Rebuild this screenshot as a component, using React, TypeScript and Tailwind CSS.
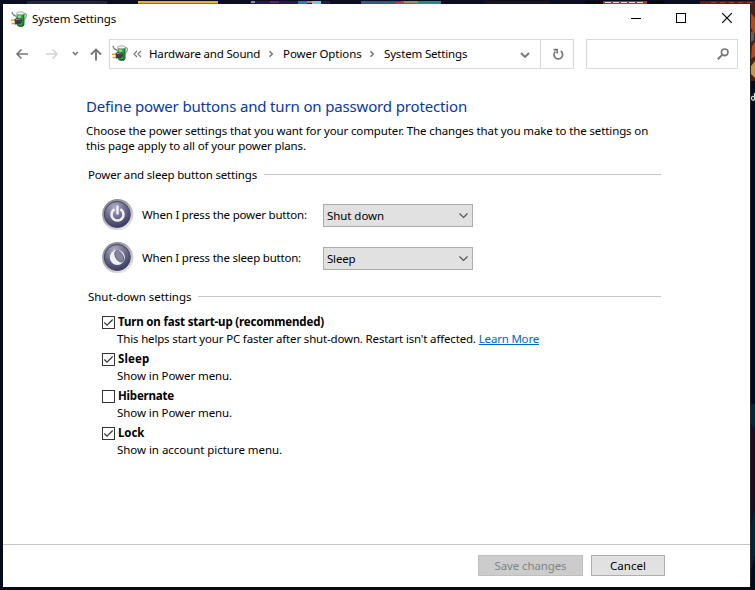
import type { ReactNode } from 'react';

function PowerPlug() {
  return (
    <svg width="16" height="16" viewBox="0 0 16 16" className="shrink-0">
      <path d="M12.800 2.800 Q15.600 2 15.300 4.800 Q15 7.500 13.200 8.500" fill="none" stroke="#8c9794" strokeWidth="1.300" />
      <path d="M5.500 2.500 H13.300 V13.500 Q12.500 15.800 9.500 15.800 Q6.500 15.800 6 13.500 Z" fill="#2fae40" />
      <path d="M12 3 H13.400 V13.500 Q12.800 15.300 11 15.700 Z" fill="#187a2a" />
      <path d="M7 4.500 H9.800 V8 H7Z" fill="#86e88c" />
      <path d="M6 13.300 Q9.500 15.500 13 13 L12.500 15 Q9.500 16.600 6.800 15Z" fill="#15602a" />
      <ellipse cx="9.400" cy="2.300" rx="3.900" ry="1.500" fill="#eef3ee" stroke="#879188" strokeWidth=".7" />
      <path d="M1 .8 Q1.500 4.200 4.500 4.800 L6.200 7" fill="none" stroke="#78837f" strokeWidth="1.200" />
      <path d="M0 9.200 H4.500 M.5 12.500 H5" stroke="#e3a71e" strokeWidth="1.500" />
      <path d="M3.500 8 L6.500 6.800 Q10.500 6.600 11.200 9.200 Q11.300 12 8.500 13.200 L4 13.500Z" fill="#3c3d42" />
      <path d="M4.800 8.800 L7 8 Q8.800 7.900 9.600 9" fill="none" stroke="#a0a3a6" strokeWidth="1" />
    </svg>
  );
}

function RoundButton({ id, children }: { id: string; children: ReactNode }) {
  return (
    <svg width="32" height="32" viewBox="0 0 32 32" className="shrink-0">
      <defs>
        <linearGradient id={`${id}-rim`} x1="0" y1="0" x2=".6" y2="1">
          <stop offset="0" stopColor="#777a7c" />
          <stop offset=".5" stopColor="#a9a9ae" />
          <stop offset="1" stopColor="#e3e3e6" />
        </linearGradient>
        <radialGradient id={`${id}-face`} cx=".4" cy=".22" r=".8">
          <stop offset="0" stopColor="#b0b0c8" />
          <stop offset=".5" stopColor="#6e6d8e" />
          <stop offset="1" stopColor="#39385f" />
        </radialGradient>
      </defs>
      <circle cx="15.700" cy="15.700" r="15.600" fill={`url(#${id}-rim)`} />
      <circle cx="15.300" cy="15.500" r="13" fill={`url(#${id}-face)`} stroke="#454462" strokeWidth="1" />
      {children}
    </svg>
  );
}

function Select({ value, tracking }: { value: string; tracking: string }) {
  return (
    <div className="flex h-[23px] w-[150px] items-center justify-between border border-[#adadad] bg-[#e1e1e1] pl-[3px] pr-[3px]">
      <span className={`pt-px ${tracking}`}>{value}</span>
      <svg width="11" height="7" viewBox="0 0 11 7" fill="none" stroke="#505050" strokeWidth="1.100">
        <path d="M1.500 1.500 L5.500 5.500 L9.500 1.500" />
      </svg>
    </div>
  );
}

function SectionTitle({ children, tracking }: { children: ReactNode; tracking: string }) {
  return (
    <div className="flex h-4 w-[573px] items-center">
      <span className={`mr-[7px] ${tracking}`}>{children}</span>
      <span className="mb-[2px] h-px flex-1 bg-[#c5c5c5]" />
    </div>
  );
}

function Option({ label, tracking, checked, children }: { label: string; tracking: string; checked?: boolean; children: ReactNode }) {
  return (
    <div className="h-[37px]">
      <div className="flex h-[17px] items-center">
        <span className="mr-[3px] mt-px flex size-[13px] items-center justify-center border border-[#333] bg-white">
          {checked && (
            <svg width="11" height="11" viewBox="0 0 11 11" fill="none" stroke="#333" strokeWidth="1.200">
              <path d="M1.300 5.500 L4 8.200 L9.700 2.500" />
            </svg>
          )}
        </span>
        <span className={`font-bold ${tracking}`}>{label}</span>
      </div>
      <div className="flex h-[17px] items-center pl-[15px]">{children}</div>
    </div>
  );
}

function Separator() {
  return (
    <svg width="6" height="8" viewBox="0 0 6 8" fill="none" stroke="#777" strokeWidth="1.500" className="shrink-0">
      <path d="M1.500 1.200 L4.300 4 L1.500 6.800" />
    </svg>
  );
}

function TitleBar() {
  return (
    <div className="flex h-[30px] items-center">
      <div className="ml-2 flex w-[604px] shrink-0 items-center gap-[5px]">
        <PowerPlug />
        <span className="tracking-[-0.12px]">System Settings</span>
      </div>
      <svg width="106" height="12" viewBox="0 0 106 12" fill="none" stroke="#000" strokeWidth="1" className="mb-[2px] ml-4 shrink-0">
        <path d="M0 6.500 H10" shapeRendering="crispEdges" />
        <path d="M45.500 1.500 h9 v9 h-9z" shapeRendering="crispEdges" />
        <path d="M91.200 1.200 L100.800 10.800 M100.800 1.200 L91.200 10.800" strokeWidth="1.200" />
      </svg>
    </div>
  );
}

function AddressBar() {
  return (
    <div className="mt-[5px] flex h-[30px] items-center">
      <svg width="90" height="16" viewBox="0 0 90 16" fill="none" className="ml-3 mr-1 shrink-0">
        <g stroke="#777" strokeWidth="1.600">
          <path d="M2 8 H13 M6.500 3.500 L2 8 L6.500 12.500" />
          <path d="M57.800 6 L60.300 8.500 L62.800 6" strokeWidth="1.600" />
          <path d="M81 14.500 V4 M76 8.500 L81 3.500 L86 8.500" strokeWidth="1.900" />
        </g>
        <path d="M31 8 H42 M37.500 3.500 L42 8 L37.500 12.500" stroke="#d4d4d4" strokeWidth="1.500" />
      </svg>
      <div className="flex h-full w-[465px] shrink-0 border border-[#d9d9d9]">
        <div className="flex w-[430px] items-center pl-[2px]">
          <span className="mb-[2px]">
            <PowerPlug />
          </span>
          <svg width="9" height="8" viewBox="0 0 9 8" fill="none" stroke="#777" strokeWidth="1.200" className="ml-[5px] mr-[7px] shrink-0">
            <path d="M4 1 L1 4 L4 7 M8 1 L5 4 L8 7" />
          </svg>
          <span className="w-[119px] tracking-[-0.17px]">Hardware and Sound</span>
          <Separator />
          <span className="ml-[9px] w-[86px] tracking-[-0.08px]">Power Options</span>
          <Separator />
          <span className="ml-[9px] tracking-[-0.17px]">System Settings</span>
          <svg width="10" height="7" viewBox="0 0 10 7" fill="none" stroke="#777" strokeWidth="1.900" className="ml-auto mr-[10px] mt-[3px]">
            <path d="M1 1 L5 5 L9 1" />
          </svg>
        </div>
        <div className="flex flex-1 items-center justify-center border-l border-[#d9d9d9]">
          <svg width="12" height="13" viewBox="0 0 12 13" fill="none" stroke="#777" strokeWidth="1.700" className="ml-px">
            <path d="M8.700 3 A4.300 4.300 0 1 1 3.300 3.500" />
            <path d="M1.500 1.600 H5.200 V5.500" />
          </svg>
        </div>
      </div>
      <div className="ml-3 flex h-full w-[152px] shrink-0 items-center justify-end border border-[#d9d9d9] pr-2">
        <svg width="12" height="12" viewBox="0 0 12 12" fill="none" stroke="#777" strokeWidth="1.700">
          <circle cx="7.700" cy="4.300" r="3.300" />
          <path d="M5.400 6.600 L.8 11.200" strokeWidth="2" />
        </svg>
      </div>
    </div>
  );
}

function TopStrip() {
  return (
    <svg width="755" height="4" viewBox="0 0 755 4" shapeRendering="crispEdges" className="block shrink-0">
      <rect width="755" height="4" fill="#0b0d22" />
      <rect x="27" y="1" width="80" height="3" fill="#252338" />
      <rect x="138" y="1" width="80" height="2" fill="#dcb52a" />
      <rect x="138" y="3" width="80" height="1" fill="#8d7629" />
      <rect x="250" y="1" width="80" height="3" fill="#251a4b" />
      <rect x="251" y="1" width="4" height="2" fill="#8d8aa0" />
      <rect x="270" y="1" width="9" height="2" fill="#59256c" />
      <rect x="298" y="1" width="9" height="3" fill="#2b7bae" />
      <rect x="307" y="1" width="5" height="2" fill="#c5796f" />
      <rect x="312" y="1" width="9" height="3" fill="#83c5cd" />
      <rect x="361" y="1" width="40" height="3" fill="#2d5c7d" />
      <rect x="401" y="1" width="40" height="3" fill="#2a8788" />
      <rect x="396" y="2" width="9" height="2" fill="#bf3940" />
      <rect x="404" y="1" width="14" height="2" fill="#8a9b48" />
      <rect x="485" y="1" width="65" height="3" fill="#1b141b" />
      <rect x="585" y="1" width="80" height="3" fill="#08080a" />
      <rect x="603" y="1" width="44" height="3" fill="#bd2430" />
      <path d="M605 2.500 H645" stroke="#e8d8da" strokeDasharray="6 2" />
      <rect x="700" y="1" width="55" height="3" fill="#582016" />
      <path d="M711 2.500 H755" stroke="#a33b19" strokeDasharray="5 4" />
    </svg>
  );
}

function RightStrip() {
  return (
    <svg width="5" height="583" viewBox="0 0 5 583" className="block shrink-0">
      <rect width="5" height="583" fill="#020a20" />
      <rect width="5" height="77" fill="#4a2017" />
      <path d="M0 8 L5 14 V30 L1 24Z M2 42 L5 38 V52 L1 55Z" fill="#b34a1e" />
      <path d="M1 28 L4 26 V36 L1 38Z" fill="#596165" />
      <path d="M1 62 L5 57 V74 L1 70Z" fill="#c9924e" />
      <path d="M4.500 89 V96 M4.500 93 Q1.500 91.500 1.500 94 Q1.500 97 4.500 96" fill="none" stroke="#d0d0d8" strokeWidth="1.300" />
      <path d="M0 400 H5 V425 L0 419Z" fill="#02273b" />
      <path d="M0 419 L5 425 V505 L0 525Z" fill="#170d1c" />
      <path d="M5 505 V550 L0 570 V525Z" fill="#022438" />
      <rect width="1" height="583" fill="#252525" />
    </svg>
  );
}

export default function App() {
  return (
    <div className="flex h-[590px] w-[755px] flex-col overflow-hidden whitespace-nowrap bg-[#060b1d] font-['Noto_Sans',sans-serif] text-[11.5px] leading-4 text-black">
      <TopStrip />
      <div className="flex h-[583px]">
        <div className="ml-[3px] flex w-[747px] shrink-0 flex-col bg-white">
          <TitleBar />
          <AddressBar />
          <main className="flex flex-1 flex-col pl-[83px] pt-[27px]">
            <h1 className="h-5 text-[15px] leading-5 tracking-[-0.155px] text-[#08399f]">
              Define power buttons and turn on password protection
            </h1>
            <p className="mt-[7px] leading-[15px]">
              <span className="block tracking-[-0.12px]">
                Choose the power settings that you want for your computer. The changes that you make to the settings on
              </span>
              <span className="block tracking-[-0.13px]">this page apply to all of your power plans.</span>
            </p>
            <div className="ml-[2px] mt-[14px]">
              <SectionTitle tracking="tracking-[-0.18px]">Power and sleep button settings</SectionTitle>
              <div className="ml-[14px] mt-4 flex h-8 items-center">
                <RoundButton id="power">
                  <path d="M11.800 10.800 A6 6 0 1 0 19.200 10.800" fill="none" stroke="#f0f0f6" strokeWidth="2.600" strokeLinecap="round" />
                  <path d="M15.500 7.500 V14.500" stroke="#f0f0f6" strokeWidth="2.500" strokeLinecap="round" />
                </RoundButton>
                <span className="ml-2 w-[181px] tracking-[-0.2px]">When I press the power button:</span>
                <Select value="Shut down" tracking="tracking-[-0.06px]" />
              </div>
              <div className="ml-[14px] mt-[11px] flex h-8 items-center">
                <RoundButton id="sleep">
                  <circle cx="15.300" cy="15.500" r="7.500" fill="#f0f0f5" />
                  <ellipse cx="17.200" cy="14.300" rx="3.700" ry="6.300" transform="rotate(-30 17.200 14.300)" fill="#85849c" stroke="#55546e" strokeWidth=".7" />
                </RoundButton>
                <span className="ml-2 w-[181px] tracking-[-0.21px]">When I press the sleep button:</span>
                <Select value="Sleep" tracking="tracking-[-0.2px]" />
              </div>
            </div>
            <div className="ml-[2px] mt-[15px]">
              <SectionTitle tracking="tracking-[-0.05px]">Shut-down settings</SectionTitle>
              <div className="ml-[14px] mt-2">
                <Option label="Turn on fast start-up (recommended)" tracking="tracking-[-0.17px]" checked>
                  <span className="tracking-[-0.165px]">This helps start your PC faster after shut-down. Restart isn't affected.</span>
                  <a className="ml-[3px] tracking-[-0.2px] text-[#0066cc] underline">Learn More</a>
                </Option>
                <Option label="Sleep" tracking="tracking-[0.1px]" checked>
                  <span className="tracking-[-0.085px]">Show in Power menu.</span>
                </Option>
                <Option label="Hibernate" tracking="tracking-[-0.19px]">
                  <span className="tracking-[-0.085px]">Show in Power menu.</span>
                </Option>
                <Option label="Lock" tracking="tracking-[-0.1px]" checked>
                  <span className="tracking-[-0.045px]">Show in account picture menu.</span>
                </Option>
              </div>
            </div>
          </main>
          <footer className="flex h-[43px] items-start gap-2 border-t border-[#c5c5c5] pl-[475px] pt-[10px]">
            <button className="h-[21px] w-[105px] border border-[#bfbfbf] bg-[#cccccc] leading-[20px] tracking-[-0.11px] text-[#838383]">
              Save changes
            </button>
            <button className="h-[21px] w-[74px] border border-[#adadad] bg-[#e1e1e1] leading-[20px] tracking-[0.05px]">Cancel</button>
          </footer>
        </div>
        <RightStrip />
      </div>
    </div>
  );
}
